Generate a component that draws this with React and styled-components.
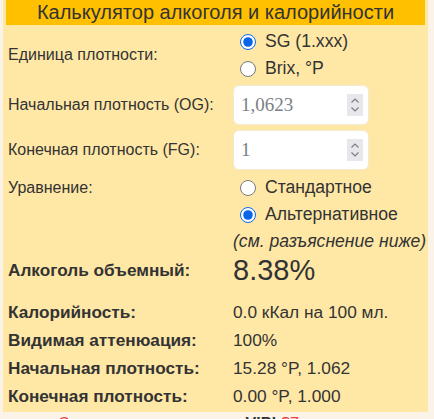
import React, { useState } from "react";
import styled, { createGlobalStyle } from "styled-components";

const GlobalStyle = createGlobalStyle`
  body {
    margin: 0;
    background: #fcf3e8;
    font-family: "Liberation Sans", Arial, sans-serif;
    font-size: 16px;
    color: #333;
  }
`;

const Panel = styled.div`
  margin: 0 6px 0 3px;
  padding: 0 3px 2px;
  background: #ffe8a6;
`;

const Header = styled.h2`
  margin: 0;
  height: 25px;
  line-height: 25px;
  background: #ffc000;
  text-align: center;
  font-size: 20px;
  font-weight: normal;
  color: #333;
`;

const Row = styled.div`
  display: grid;
  grid-template-columns: 227px 1fr;
  align-items: ${(p) => (p.$top ? "start" : "center")};
  margin-top: ${(p) => p.$mt || 0}px;
  min-height: ${(p) => p.$h || 0}px;
`;

const Label = styled.div`
  padding-left: 2px;
  font-size: ${(p) => (p.$bold ? "17.2px" : "16px")};
  font-weight: ${(p) => (p.$bold ? "bold" : "normal")};
  line-height: ${(p) => (p.$top ? "27px" : "normal")};
  white-space: nowrap;
`;

const Options = styled.div`
  display: flex;
  flex-direction: column;
`;

const Option = styled.label`
  display: flex;
  align-items: center;
  height: 27px;
  font-size: 17.6px;
  cursor: pointer;
  white-space: nowrap;
`;

const Radio = styled.input`
  width: 16px;
  height: 16px;
  margin: 0 9px 0 7px;
  accent-color: #0b65e8;
`;

const Note = styled.div`
  font-size: 17.6px;
  font-style: italic;
  line-height: 27px;
  white-space: nowrap;
`;

const InputBox = styled.div`
  display: flex;
  align-items: center;
  box-sizing: border-box;
  width: 136px;
  height: 40px;
  padding: 0 5px 0 7px;
  background: #fff;
  border: 1px solid #f3ead2;
  border-radius: 6px;
`;

const Field = styled.input`
  flex: 1;
  min-width: 0;
  border: none;
  outline: none;
  padding: 0;
  background: transparent;
  font-family: "Liberation Serif", "Times New Roman", serif;
  font-size: 19px;
  color: #333;

  &::placeholder {
    color: #7b7f86;
  }
`;

const Spinner = styled.span`
  display: flex;
  width: 16px;
  height: 22px;
  background: #e8e8ec;
`;

const BigValue = styled.div`
  font-size: 29px;
  line-height: 31px;
`;

const Value = styled.div`
  font-size: 17.3px;
  white-space: nowrap;
`;

const Promo = styled.p`
  margin: 3px 0 0;
  padding-left: 58px;
  line-height: 18px;
  white-space: nowrap;
`;

const Red = styled.span`
  color: #e8403a;
`;

function NumberInput({ placeholder }) {
  return (
    <InputBox>
      <Field type="text" placeholder={placeholder} />
      <Spinner>
        <svg width="16" height="22" viewBox="0 0 16 22" fill="none" stroke="#7d7d85" strokeWidth="1.2">
          <path d="M4.5 8.5 L8 5 L11.5 8.5" />
          <path d="M4.5 13.5 L8 17 L11.5 13.5" />
        </svg>
      </Spinner>
    </InputBox>
  );
}

const results = [
  ["Калорийность:", "0.0 кКал на 100 мл."],
  ["Видимая аттенюация:", "100%"],
  ["Начальная плотность:", "15.28 °P, 1.062"],
  ["Конечная плотность:", "0.00 °P, 1.000"],
];

export default function App() {
  const [unit, setUnit] = useState("sg");
  const [eq, setEq] = useState("alt");

  return (
    <>
      <GlobalStyle />
      <Panel>
        <Header>Калькулятор алкоголя и калорийности</Header>

        <Row $mt={3}>
          <Label>Единица плотности:</Label>
          <Options>
            <Option>
              <Radio type="radio" name="unit" checked={unit === "sg"} onChange={() => setUnit("sg")} />
              SG (1.xxx)
            </Option>
            <Option>
              <Radio type="radio" name="unit" checked={unit === "brix"} onChange={() => setUnit("brix")} />
              Brix, °P
            </Option>
          </Options>
        </Row>

        <Row $mt={3}>
          <Label>Начальная плотность (OG):</Label>
          <NumberInput placeholder="1,0623" />
        </Row>

        <Row $mt={5}>
          <Label>Конечная плотность (FG):</Label>
          <NumberInput placeholder="1" />
        </Row>

        <Row $mt={4} $top>
          <Label $top>Уравнение:</Label>
          <Options>
            <Option>
              <Radio type="radio" name="eq" checked={eq === "std"} onChange={() => setEq("std")} />
              Стандартное
            </Option>
            <Option>
              <Radio type="radio" name="eq" checked={eq === "alt"} onChange={() => setEq("alt")} />
              Альтернативное
            </Option>
            <Note>(см. разъяснение ниже)</Note>
          </Options>
        </Row>

        <Row $h={31}>
          <Label $bold>Алкоголь объемный:</Label>
          <BigValue>8.38%</BigValue>
        </Row>

        {results.map(([k, v], i) => (
          <Row key={k} $h={28} $mt={i === 0 ? 12 : 0}>
            <Label $bold>{k}</Label>
            <Value>{v}</Value>
          </Row>
        ))}
      </Panel>
      <Promo>
        <Red>Скидка</Red> для подписчиков <b>VIP!</b> <Red>$7</Red>
      </Promo>
    </>
  );
}
